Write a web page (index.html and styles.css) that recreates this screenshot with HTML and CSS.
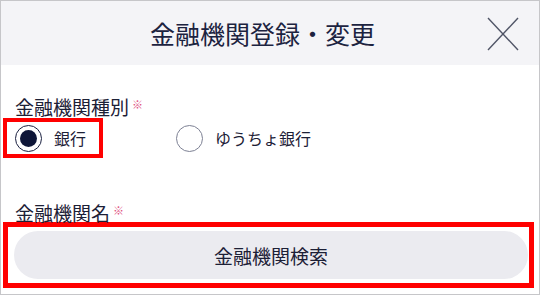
FILE: index.html
```html
<!DOCTYPE html>
<html lang="ja">
<head>
<meta charset="utf-8">
<title>金融機関登録・変更</title>
<link rel="stylesheet" href="styles.css">
</head>
<body>
<div class="frame">
  <header class="modal-header">
    <h1 class="modal-title">金融機関登録・変更</h1>
    <button class="close-btn" aria-label="閉じる">
      <svg width="32" height="34" viewBox="0 0 32 34">
        <line x1="1" y1="1" x2="31" y2="33" stroke="#4f5466" stroke-width="1.4"/>
        <line x1="31" y1="1" x2="1" y2="33" stroke="#4f5466" stroke-width="1.4"/>
      </svg>
    </button>
  </header>
  <main class="modal-body">
    <div class="field-label">金融機関種別<span class="req">※</span></div>
    <div class="radio-group">
      <label class="radio-option highlight">
        <span class="radio checked"></span>
        <span class="radio-text">銀行</span>
      </label>
      <label class="radio-option">
        <span class="radio"></span>
        <span class="radio-text">ゆうちょ銀行</span>
      </label>
    </div>
    <div class="field-label second">金融機関名<span class="req">※</span></div>
    <div class="search-wrap">
      <button class="search-btn">金融機関検索</button>
    </div>
  </main>
</div>
</body>
</html>
```

FILE: styles.css
```css
* { box-sizing: border-box; }
html, body { margin: 0; padding: 0; background: #ffffff; }
body {
  font-family: "Noto Sans CJK JP", "Noto Sans", sans-serif;
  color: #1c2036;
}
.frame {
  width: 540px;
  height: 295px;
  border: 1px solid #c6c6c9;
  background: #ffffff;
  overflow: hidden;
}
.modal-header {
  height: 64px;
  background: #f4f4f7;
  display: flex;
  align-items: center;
  padding: 0 20px 0 37px;
}
.modal-title {
  flex: 1;
  margin: 0;
  text-align: center;
  font-size: 25px;
  font-weight: 400;
  color: #1c2340;
  line-height: 1;
}
.close-btn {
  width: 32px;
  height: 34px;
  padding: 0;
  border: 0;
  background: transparent;
  display: flex;
  margin-top: 2px;
}
.modal-body {
  padding: 0 6px 0 2px;
}
.field-label {
  margin: 27px 0 0 12px;
  font-size: 19px;
  line-height: 24px;
  color: #1c2036;
}
.field-label.second { margin-top: 40px; }
.req {
  color: #e0507f;
  font-size: 11px;
  vertical-align: 6px;
  margin-left: 3px;
}
.radio-group {
  display: flex;
  align-items: center;
  margin-top: -1px;
}
.radio-option {
  display: flex;
  align-items: center;
  gap: 12px;
  height: 40px;
  padding: 0 0 0 12px;
  border: 4px solid transparent;
}
.radio-option.highlight {
  border-color: #ff0000;
  width: 100px;
  padding-left: 8px;
}
.radio-option + .radio-option { margin-left: 57px; }
.radio {
  width: 27px;
  height: 27px;
  border-radius: 50%;
  border: 1.5px solid #7d8194;
  display: flex;
  align-items: center;
  justify-content: center;
  flex: none;
}
.radio.checked { border-color: #1a2040; }
.radio.checked::after {
  content: "";
  width: 17px;
  height: 17px;
  border-radius: 50%;
  background: #0e1638;
}
.radio-text {
  font-size: 16px;
  color: #1c2036;
  line-height: 1;
}
.search-wrap {
  margin-top: -3px;
  border: 5px solid #ff0000;
  padding: 4px 1px 4px 6px;
  width: 531px;
}
.search-btn {
  display: block;
  width: 100%;
  height: 48px;
  border: 0;
  border-radius: 24px;
  background: #ebebf0;
  font-family: "Noto Sans CJK JP", "Noto Sans", sans-serif;
  font-size: 19px;
  color: #1c2036;
  padding: 0;
}
```
